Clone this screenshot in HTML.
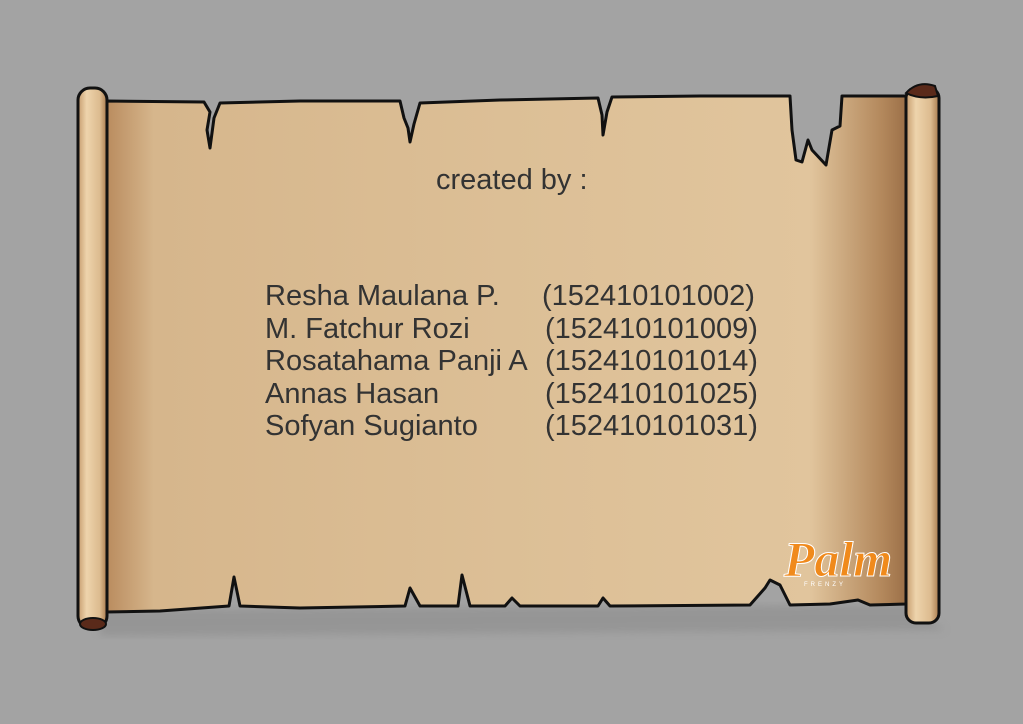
<!DOCTYPE html>
<html><head><style>
html,body{margin:0;padding:0;background:#a3a3a3;}
body{width:1023px;height:724px;position:relative;overflow:hidden;font-family:"Liberation Sans",sans-serif;}
svg{position:absolute;left:0;top:0}
.t{position:absolute;color:#333;font-size:29px;white-space:pre;line-height:32.5px}
</style></head><body>
<svg width="1023" height="724" viewBox="0 0 1023 724">
<defs>
<linearGradient id="pg" x1="0" x2="1" y1="0" y2="0">
<stop offset="0" stop-color="#b98b5e"/>
<stop offset="0.06" stop-color="#d6b68c"/>
<stop offset="0.5" stop-color="#dcbf96"/>
<stop offset="0.88" stop-color="#e1c59d"/>
<stop offset="0.97" stop-color="#b3885c"/>
<stop offset="1" stop-color="#9c7048"/>
</linearGradient>
<linearGradient id="rl" x1="0" x2="1">
<stop offset="0" stop-color="#c69c6e"/>
<stop offset="0.3" stop-color="#eed4ac"/>
<stop offset="0.75" stop-color="#dcbb8f"/>
<stop offset="1" stop-color="#a97a4d"/>
</linearGradient>
<filter id="sh"><feGaussianBlur stdDeviation="4"/></filter>
</defs>
<path d="M100 610 L910 605 L945 630 L100 636Z" fill="#888" opacity=".5" filter="url(#sh)"/>
<path fill="url(#pg)" stroke="#111" stroke-width="3" stroke-linejoin="round"
d="M106 101 L204 102 L210 112 L207 130 L210 148 L214 118 L220 103 L300 101 L400 101 L404 118 L408 128 L410 142 L414 124 L420 103 L500 100 L598 98 L602 115 L603 135 L607 112 L612 97 L700 96 L790 96 L792 130 L796 160 L802 162 L808 140 L812 150 L826 165 L832 130 L840 126 L842 96 L906 96 L906 604 L870 605 L858 600 L830 604 L790 605 L780 585 L770 580 L765 588 L750 605 L610 606 L603 598 L598 606 L520 606 L512 598 L505 606 L470 606 L462 575 L458 606 L420 606 L410 588 L405 606 L300 608 L240 606 L234 577 L229 606 L160 611 L106 612Z"/>
<rect x="78" y="88" width="29" height="540" rx="12" fill="url(#rl)" stroke="#111" stroke-width="3"/>
<ellipse cx="93" cy="624" rx="13" ry="6" fill="#5a2a1a" stroke="#111" stroke-width="2"/>
<rect x="906" y="88" width="33" height="535" rx="10" fill="url(#rl)" stroke="#111" stroke-width="3"/>
<path d="M906 93 Q918 80 935 86 L938 96 Q920 100 906 93Z" fill="#5a2a1a" stroke="#111" stroke-width="2"/>
<text x="838" y="576" text-anchor="middle" font-family="Liberation Serif,serif" font-style="italic" font-weight="bold" font-size="50" fill="#f08a1c" stroke="#fff" stroke-width="1">Palm</text>
<text x="825" y="586" text-anchor="middle" font-size="6" letter-spacing="3" fill="#fff" font-family="Liberation Sans,sans-serif">FRENZY</text>
</svg>
<div class="t" style="left:436px;top:164px">created by :</div>
<div class="t" style="left:265px;top:280px">Resha Maulana P.
M. Fatchur Rozi
Rosatahama Panji A
Annas Hasan
Sofyan Sugianto</div>
<div class="t" style="left:542px;top:280px">(152410101002)</div>
<div class="t" style="left:545px;top:312.5px">(152410101009)
(152410101014)
(152410101025)
(152410101031)</div>
</body></html>
